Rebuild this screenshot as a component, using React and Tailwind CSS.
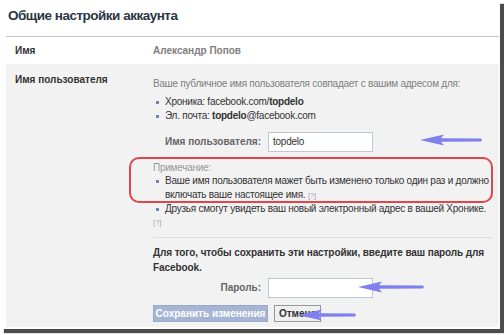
import React from 'react';

const Arrow = ({ className, w }) => (
  <svg className={`absolute ${className}`} width={w} height="14" viewBox={`0 0 ${w} 14`}>
    <defs>
      <filter id="soft" x="-10%" y="-40%" width="120%" height="180%">
        <feGaussianBlur stdDeviation="0.6" />
      </filter>
    </defs>
    <path
      d={`M1 7 L25 1.5 L22 5.2 L${w - 2} 5.6 L${w - 1} 7 L${w - 2} 8.4 L22 8.8 L25 12.5 Z`}
      fill="#7f7ff0"
      filter="url(#soft)"
    />
  </svg>
);

const Bullet = ({ children }) => (
  <li className="flex">
    <span className="w-[12px] shrink-0 flex pt-[6px] pl-[3px]">
      <span className="w-[3px] h-[3px] bg-[#6d84b4]" />
    </span>
    <span>{children}</span>
  </li>
);

export default function App() {
  return (
    <div className="w-[504px] h-[335px] bg-white overflow-hidden font-['Liberation_Sans',Arial,sans-serif] text-[10px] tracking-[-0.25px] leading-[14px] text-[#333]">
      <div className="relative w-[500px] h-[329px] bg-white pl-[6px] pr-[1px] shadow-[4px_4px_1px_rgba(45,45,45,0.85)]">
        {/* header */}
        <div className="h-[37px] pl-[2px] pt-[7px] text-[13.5px] leading-[18px] tracking-[-0.5px] font-bold text-[#2b3544] border-b border-[#c4c4c4]">
          Общие настройки аккаунта
        </div>

        {/* name row */}
        <div className="h-[27px] flex items-center font-bold tracking-normal">
          <div className="w-[147px] pl-[9px]">Имя</div>
          <div className="text-[#808080]">Александр Попов</div>
        </div>

        {/* username row */}
        <div className="h-[263px] bg-[#f2f2f2] flex">
          <div className="w-[147px] pl-[9px] pt-[9px] font-bold tracking-normal">Имя пользователя</div>
          <div className="flex-1 pt-[13px] pr-[7px]">
            <p className="text-[#808080]">Ваше публичное имя пользователя совпадает с вашим адресом для:</p>
            <ul className="mt-[4px]">
              <Bullet>
                Хроника: facebook.com/<b>topdelo</b>
              </Bullet>
              <Bullet>
                Эл. почта: <b>topdelo</b>@facebook.com
              </Bullet>
            </ul>

            <div className="mt-[9px] flex items-center h-[20px]">
              <div className="w-[108px] text-right font-bold tracking-normal text-[#666]">Имя пользователя:</div>
              <div className="ml-[7px] w-[105px] h-[20px] bg-white border border-[#bdc7d8] pl-[4px] leading-[18px]">topdelo</div>
            </div>

            <div className="mt-[8.5px] leading-[13.5px]">
              <p className="text-[#999]">Примечание:</p>
              <ul>
                <Bullet>
                  Ваше имя пользователя мажет быть изменено только один раз и должно включать ваше настоящее имя.{' '}
                  <span className="text-[8px] text-[#aaa]">[?]</span>
                </Bullet>
                <Bullet>Друзья смогут увидеть ваш новый электронный адрес в вашей Хронике.</Bullet>
              </ul>
              <div className="text-[8px] text-[#aaa] leading-[13px]">[?]</div>
            </div>

            <div className="mt-[8px] border-t border-[#dcdcdc]" />
            <p className="mt-[7px] font-bold leading-[15px] tracking-[-0.1px]">
              Для того, чтобы сохранить эти настройки, введите ваш пароль для Facebook.
            </p>

            <div className="mt-[3px] flex items-center h-[20px]">
              <div className="w-[108px] text-right font-bold tracking-normal text-[#666]">Пароль:</div>
              <div className="ml-[7px] w-[105px] h-[20px] bg-white border border-[#bdc7d8]" />
            </div>

            <div className="mt-[7px] flex gap-[6px] tracking-normal">
              <div className="w-[115px] h-[17px] bg-[#a6b5d3] border border-[#98a9cb] text-white font-bold text-center leading-[15px]">
                Сохранить изменения
              </div>
              <div className="w-[47px] h-[17px] bg-[#f0f0f0] border border-[#999] font-bold text-center leading-[15px]">
                Отмена
              </div>
            </div>
          </div>
        </div>

        {/* annotations */}
        <div className="absolute left-[129px] top-[157px] w-[364px] h-[46px] border-2 border-[#e0454a] rounded-[10px]" />
        <Arrow className="left-[419px] top-[133px]" w={64} />
        <Arrow className="left-[357px] top-[280px]" w={68} />
        <Arrow className="left-[297px] top-[308px]" w={60} />
      </div>
    </div>
  );
}
